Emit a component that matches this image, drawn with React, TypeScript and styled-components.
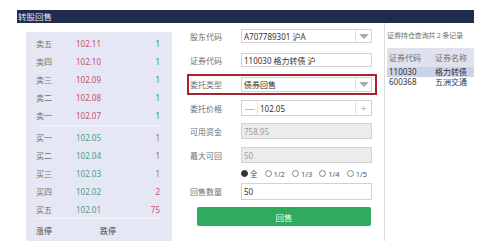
import React from 'react';
import styled, { createGlobalStyle, css } from 'styled-components';

const Global = createGlobalStyle`
  html, body { margin: 0; padding: 0; background: #fff; }
  body {
    font-family: "Noto Sans", "Noto Sans CJK SC", sans-serif;
    font-size: 8px;
    color: #555;
  }
  #root { width: 499px; height: 248px; overflow: hidden; }
`;

const Page = styled.div`
  padding: 10px 25px 0 17px;
`;

const TitleBar = styled.div`
  height: 13px;
  background: #1f2c4e;
  color: #e3e6f0;
  font-size: 8.5px;
  line-height: 13px;
  padding-left: 1px;
`;

const Main = styled.div`
  display: flex;
  align-items: flex-start;
`;

/* ---------- order book ---------- */
const Book = styled.div`
  margin: 9px 0 0 9px;
  width: 146px;
  height: 209px;
  box-sizing: border-box;
  background: #e5e7f4;
  padding: 2px 12px 0 10px;
`;

const BookRow = styled.div`
  display: grid;
  grid-template-columns: 40px 1fr auto;
  align-items: center;
  height: 18px;
`;

const BookLabel = styled.span`
  color: #707070;
`;

const Price = styled.span<{ $up: boolean }>`
  color: ${(p) => (p.$up ? '#c5506a' : '#45a08c')};
  font-size: 8px;
`;

const Qty = styled.span<{ $up: boolean }>`
  color: ${(p) => (p.$up ? '#3f9a3f' : '#c5506a')};
  text-align: right;
`;

const Divider = styled.div<{ $top: number; $bottom: number }>`
  height: 1px;
  background: #f4f5fb;
  margin: ${(p) => p.$top}px 0 ${(p) => p.$bottom}px;
`;

const LimitRow = styled.div`
  display: grid;
  grid-template-columns: 64px 1fr;
  align-items: center;
  height: 18px;
  color: #444;
`;

/* ---------- form ---------- */
const Form = styled.div`
  width: 213px;
  height: 218px;
  box-sizing: border-box;
  border-right: 1px solid #dedede;
  padding: 1px 0 0 18px;
  display: flex;
  flex-direction: column;
`;

const FormRow = styled.div<{ $h: number; $highlight?: boolean }>`
  display: flex;
  align-items: center;
  height: ${(p) => p.$h}px;
  flex: none;
  ${(p) =>
    p.$highlight &&
    css`
      box-sizing: border-box;
      width: 190px;
      height: 21px;
      margin: 2px 0 2px -3px;
      padding-left: 1px;
      border: 2px solid #a82430;
    `}
`;

const Label = styled.span`
  width: 51px;
  flex: none;
  color: #707070;
`;

const Field = styled.div<{ $h: number; $disabled?: boolean }>`
  box-sizing: border-box;
  width: 131px;
  height: ${(p) => p.$h}px;
  border: 1px solid #d2d2d2;
  background: ${(p) => (p.$disabled ? '#ececec' : '#fff')};
  color: ${(p) => (p.$disabled ? '#a0a0a0' : '#333')};
  display: flex;
  align-items: center;
  padding-left: 2px;
  overflow: hidden;
`;

const FieldText = styled.span`
  flex: 1;
  white-space: nowrap;
`;

const ArrowBox = styled.div`
  width: 15px;
  align-self: stretch;
  border-left: 1px solid #e2e2e2;
  display: flex;
  align-items: center;
  justify-content: center;
  &::after {
    content: '';
    border-left: 5px solid transparent;
    border-right: 5px solid transparent;
    border-top: 5px solid #a9acb3;
  }
`;

const StepBtn = styled.div<{ $side: 'left' | 'right' }>`
  width: 15px;
  align-self: stretch;
  display: flex;
  align-items: center;
  justify-content: center;
  color: #bbb;
  font-size: 10px;
  ${(p) =>
    p.$side === 'left'
      ? css`border-right: 1px solid #e0e0e0; margin-left: -2px; margin-right: 2px;`
      : css`border-left: 1px solid #e0e0e0;`}
`;

const RadioRow = styled.div`
  display: flex;
  align-items: center;
  height: 13px;
  padding-left: 51px;
  gap: 7px;
  flex: none;
`;

const RadioItem = styled.span`
  display: inline-flex;
  align-items: center;
  gap: 2px;
  color: #555;
  font-size: 7.5px;
`;

const Dot = styled.span<{ $on?: boolean }>`
  box-sizing: border-box;
  width: 7px;
  height: 7px;
  border-radius: 50%;
  border: 1px solid ${(p) => (p.$on ? '#333' : '#888')};
  background: ${(p) => (p.$on ? '#333' : '#fff')};
`;

const SubmitButton = styled.button`
  margin: 4px 0 0 7px;
  width: 174px;
  height: 19px;
  border: none;
  border-radius: 2px;
  background: #2faa5e;
  color: #eafff0;
  font-family: "Noto Sans", "Noto Sans CJK SC", sans-serif;
  font-size: 8.5px;
  padding: 0;
`;

/* ---------- positions ---------- */
const Positions = styled.div`
  flex: 1;
  padding: 6px 0 0 2px;
`;

const Caption = styled.div`
  height: 12px;
  line-height: 12px;
  color: #707070;
  font-size: 7.2px;
  letter-spacing: -0.3px;
  white-space: nowrap;
`;

const Table = styled.div`
  margin-top: 7px;
  width: 87px;
`;

const TRow = styled.div<{ $kind: 'head' | 'selected' | 'plain' }>`
  display: grid;
  grid-template-columns: 46px 1fr;
  align-items: center;
  padding-left: 2px;
  height: ${(p) => (p.$kind === 'head' ? 19 : 9.5)}px;
  line-height: 9px;
  background: ${(p) =>
    p.$kind === 'head' ? '#dfe2ee' : p.$kind === 'selected' ? '#cdd2e6' : '#fff'};
  color: ${(p) => (p.$kind === 'head' ? '#707070' : '#333')};
`;

const sells = [
  ['卖五', '102.11', '1'],
  ['卖四', '102.10', '1'],
  ['卖三', '102.09', '1'],
  ['卖二', '102.08', '1'],
  ['卖一', '102.07', '1'],
];
const buys = [
  ['买一', '102.05', '1'],
  ['买二', '102.04', '1'],
  ['买三', '102.03', '1'],
  ['买四', '102.02', '2'],
  ['买五', '102.01', '75'],
];

export default function App() {
  return (
    <>
      <Global />
      <Page>
        <TitleBar>转股回售</TitleBar>
        <Main>
          <Book>
            {sells.map(([l, p, q]) => (
              <BookRow key={l}>
                <BookLabel>{l}</BookLabel>
                <Price $up>{p}</Price>
                <Qty $up>{q}</Qty>
              </BookRow>
            ))}
            <Divider $top={1} $bottom={2} />
            {buys.map(([l, p, q]) => (
              <BookRow key={l}>
                <BookLabel>{l}</BookLabel>
                <Price $up={false}>{p}</Price>
                <Qty $up={false}>{q}</Qty>
              </BookRow>
            ))}
            <Divider $top={0} $bottom={2} />
            <LimitRow>
              <span>涨停</span>
              <span>跌停</span>
            </LimitRow>
          </Book>

          <Form>
            <FormRow $h={24}>
              <Label>股东代码</Label>
              <Field $h={14}>
                <FieldText>A707789301 沪A</FieldText>
                <ArrowBox />
              </Field>
            </FormRow>
            <FormRow $h={24}>
              <Label>证券代码</Label>
              <Field $h={14}>
                <FieldText>110030 格力转债 沪</FieldText>
              </Field>
            </FormRow>
            <FormRow $h={25} $highlight>
              <Label>委托类型</Label>
              <Field $h={15}>
                <FieldText>债券回售</FieldText>
                <ArrowBox />
              </Field>
            </FormRow>
            <FormRow $h={22}>
              <Label>委托价格</Label>
              <Field $h={16}>
                <StepBtn $side="left">—</StepBtn>
                <FieldText>102.05</FieldText>
                <StepBtn $side="right">+</StepBtn>
              </Field>
            </FormRow>
            <FormRow $h={24}>
              <Label>可用资金</Label>
              <Field $h={16} $disabled>
                <FieldText>758.95</FieldText>
              </Field>
            </FormRow>
            <FormRow $h={24}>
              <Label>最大可回</Label>
              <Field $h={16} $disabled>
                <FieldText>50</FieldText>
              </Field>
            </FormRow>
            <RadioRow>
              <RadioItem><Dot $on />全</RadioItem>
              <RadioItem><Dot />1/2</RadioItem>
              <RadioItem><Dot />1/3</RadioItem>
              <RadioItem><Dot />1/4</RadioItem>
              <RadioItem><Dot />1/5</RadioItem>
            </RadioRow>
            <FormRow $h={23}>
              <Label>回售数量</Label>
              <Field $h={17}>
                <FieldText>50</FieldText>
              </Field>
            </FormRow>
            <SubmitButton>回售</SubmitButton>
          </Form>

          <Positions>
            <Caption>证券持仓查询共 2 条记录</Caption>
            <Table>
              <TRow $kind="head">
                <span>证券代码</span>
                <span>证券名称</span>
              </TRow>
              <TRow $kind="selected">
                <span>110030</span>
                <span>格力转债</span>
              </TRow>
              <TRow $kind="plain">
                <span>600368</span>
                <span>五洲交通</span>
              </TRow>
            </Table>
          </Positions>
        </Main>
      </Page>
    </>
  );
}
